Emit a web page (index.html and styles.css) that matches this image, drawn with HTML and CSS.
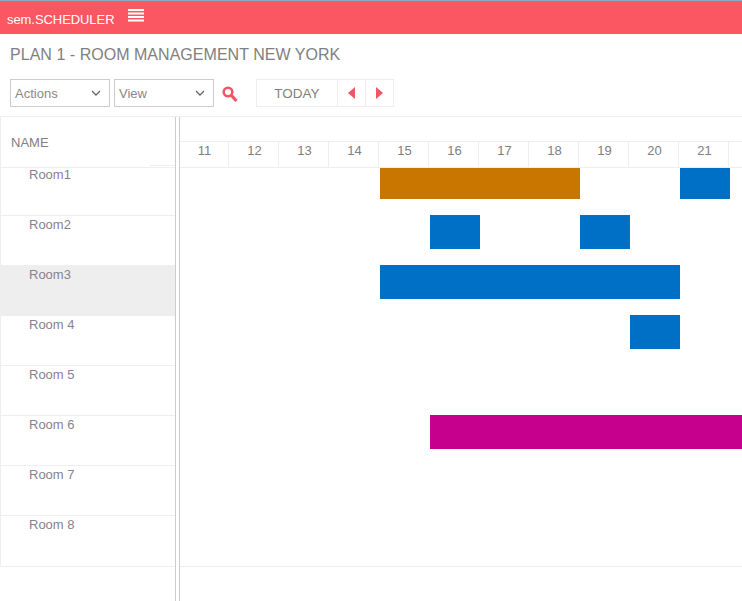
FILE: index.html
```html
<!DOCTYPE html>
<html lang="en">
<head>
    <meta charset="UTF-8">
    <meta name="viewport" content="width=device-width, initial-scale=1.0">
    <title>sem.SCHEDULER</title>
    <link rel="stylesheet" href="styles.css">
</head>
<body>
    <header class="topbar">
        <span class="brand">sem.SCHEDULER</span>
        <svg class="menu-icon" width="16" height="14" viewBox="0 0 16 14">
            <path d="M0 1h16M0 4.500h16M0 8h16M0 11.500h16" stroke="#fff" stroke-width="2" fill="none"/>
        </svg>
    </header>

    <h1 class="page-title">PLAN 1 - ROOM MANAGEMENT NEW YORK</h1>

    <div class="toolbar">
        <div class="select">
            <span>Actions</span>
            <svg width="10" height="6" viewBox="0 0 10 6"><path d="M1 1l4 4 4-4" stroke="#666" stroke-width="1.300" fill="none"/></svg>
        </div>
        <div class="select">
            <span>View</span>
            <svg width="10" height="6" viewBox="0 0 10 6"><path d="M1 1l4 4 4-4" stroke="#666" stroke-width="1.300" fill="none"/></svg>
        </div>
        <svg class="search-icon" width="16" height="17" viewBox="0 0 16 17">
            <circle cx="6" cy="6" r="4.300" stroke="#f25664" stroke-width="2.600" fill="none"/>
            <path d="M9.500 9.500l5 5.500" stroke="#f25664" stroke-width="3.200" fill="none"/>
        </svg>
        <div class="pager">
            <button class="today">TODAY</button>
            <button class="arrow">
                <svg width="7" height="12" viewBox="0 0 7 12"><path d="M7 0v12L0 6z" fill="#f25664"/></svg>
            </button>
            <button class="arrow">
                <svg width="7" height="12" viewBox="0 0 7 12"><path d="M0 0v12l7-6z" fill="#f25664"/></svg>
            </button>
        </div>
    </div>

    <main class="scheduler">
        <section class="names">
            <div class="names-head">NAME</div>
            <div class="name-row first">Room1</div>
            <div class="name-row">Room2</div>
            <div class="name-row selected">Room3</div>
            <div class="name-row">Room 4</div>
            <div class="name-row">Room 5</div>
            <div class="name-row">Room 6</div>
            <div class="name-row">Room 7</div>
            <div class="name-row">Room 8</div>
        </section>

        <div class="splitter"></div>

        <section class="timeline">
            <div class="time-top"></div>
            <div class="days">
                <div class="day">11</div>
                <div class="day">12</div>
                <div class="day">13</div>
                <div class="day">14</div>
                <div class="day">15</div>
                <div class="day">16</div>
                <div class="day">17</div>
                <div class="day">18</div>
                <div class="day">19</div>
                <div class="day">20</div>
                <div class="day">21</div>
            </div>
            <div class="lane first">
                <div class="bar orange from-15 span-4"></div>
                <div class="bar blue from-21 span-1"></div>
            </div>
            <div class="lane">
                <div class="bar blue from-16 span-1"></div>
                <div class="bar blue from-19 span-1"></div>
            </div>
            <div class="lane">
                <div class="bar blue from-15 span-6"></div>
            </div>
            <div class="lane">
                <div class="bar blue from-20 span-1"></div>
            </div>
            <div class="lane"></div>
            <div class="lane">
                <div class="bar magenta from-16 span-7"></div>
            </div>
            <div class="lane"></div>
            <div class="lane last"></div>
        </section>
    </main>
</body>
</html>
```

FILE: styles.css
```css
html, body {
    height: 100%;
}
body {
    margin: 0;
    overflow: hidden;
    font-family: "Liberation Sans", Arial, sans-serif;
    font-size: 13px;
    color: #7f7f7f;
    background-color: #fff;
}
.topbar {
    display: flex;
    align-items: center;
    height: 33px;
    padding-left: 7px;
    background-color: #fa5763;
    border-top: 1px solid #8fa9c0;
    color: #fff;
}
.brand {
    font-size: 13px;
    letter-spacing: -0.07px;
    margin-top: 3px;
}
.menu-icon {
    margin-left: 14px;
    margin-bottom: 4px;
}
.page-title {
    margin: 0;
    height: 45px;
    padding-left: 10px;
    line-height: 41px;
    font-size: 16px;
    font-weight: normal;
    letter-spacing: 0.03px;
    color: #808080;
}
.toolbar {
    display: flex;
    align-items: center;
    height: 28px;
    padding-left: 10px;
}
.select {
    display: flex;
    align-items: center;
    justify-content: space-between;
    box-sizing: border-box;
    width: 100px;
    height: 28px;
    margin-right: 4px;
    padding: 0 8px 0 4px;
    border: 1px solid #ccc;
    color: #888;
}
.search-icon {
    margin-left: 4px;
    margin-top: 2px;
}
.pager {
    display: flex;
    margin-left: 18px;
}
.pager button {
    box-sizing: border-box;
    height: 28px;
    margin: 0;
    padding: 0;
    background-color: #fff;
    border: 1px solid #eee;
    border-left: none;
    font-family: inherit;
    font-size: 13.500px;
    color: #808080;
}
.pager .today {
    width: 82px;
    border-left: 1px solid #eee;
}
.pager .arrow {
    display: flex;
    align-items: center;
    justify-content: center;
    width: 28px;
}
.scheduler {
    display: flex;
    box-sizing: border-box;
    height: 492px;
    margin-top: 9px;
    border-top: 1px solid #eee;
}
.names {
    flex: none;
    box-sizing: border-box;
    width: 175px;
    height: 450px;
    border-left: 1px solid #eee;
    border-bottom: 1px solid #eee;
}
.names-head {
    box-sizing: border-box;
    height: 50px;
    padding: 18px 0 0 10px;
    background: linear-gradient(#eee, #eee) no-repeat right 0 bottom 1px / 25px 1px;
    color: #808080;
}
.name-row {
    box-sizing: border-box;
    height: 50px;
    padding: 2px 0 0 28px;
    border-top: 1px solid #eee;
    line-height: 14px;
    color: #8a8090;
}
.name-row.first {
    height: 48px;
    padding-top: 0;
}
.name-row.selected {
    background-color: #eee;
}
.splitter {
    flex: none;
    width: 3px;
    border-left: 1px solid #ccc;
    border-right: 1px solid #ccc;
}
.timeline {
    flex: 1;
    min-width: 0;
    overflow: hidden;
}
.time-top {
    height: 24px;
    border-bottom: 1px solid #eee;
}
.days {
    display: grid;
    grid-template-columns: repeat(12, 50px);
    height: 25px;
    border-bottom: 1px solid #eee;
}
.day {
    box-sizing: border-box;
    margin-right: 1px;
    padding-left: 1px;
    border-right: 1px solid #eee;
    line-height: 18px;
    text-align: center;
    color: #808080;
}
.lane {
    display: grid;
    grid-template-columns: repeat(12, 50px);
    grid-template-rows: 34px;
    height: 50px;
}
.lane.first {
    grid-template-rows: 31px;
    height: 47px;
}
.lane.last {
    height: 51px;
    border-bottom: 1px solid #eee;
}
.bar.orange { background-color: #c87600; }
.bar.blue { background-color: #0070c6; }
.bar.magenta { background-color: #c6008c; }

.from-15 { grid-column-start: 5; }
.from-16 { grid-column-start: 6; }
.from-19 { grid-column-start: 9; }
.from-20 { grid-column-start: 10; }
.from-21 { grid-column-start: 11; }

.span-1 { grid-column-end: span 1; }
.span-4 { grid-column-end: span 4; }
.span-6 { grid-column-end: span 6; }
.span-7 { grid-column-end: span 7; }
```
